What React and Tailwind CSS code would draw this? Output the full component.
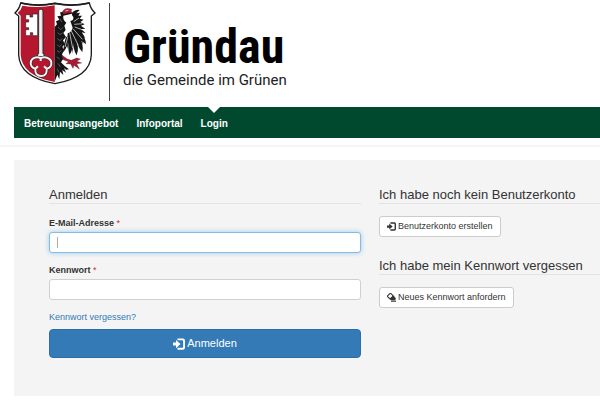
import { useState } from 'react';

const navItems = [
  { label: 'Betreuungsangebot', active: false },
  { label: 'Infoportal', active: false },
  { label: 'Login', active: true },
];

function CoatOfArms() {
  return (
    <svg viewBox="42 4 246 252" className="h-[84px] w-[82px] shrink-0" role="img" aria-label="Wappen">
      <path
        d="M62 10Q112 22 165 11Q218 22 268 10Q272 28 285 40L274 49V165Q272 232 165 252Q58 232 56 165V49L45 40Q58 28 62 10Z"
        fill="#fff"
        stroke="#1c1c1c"
        strokeWidth="4"
      />
      {/* rote Hälfte mit Schlüssel */}
      <path d="M67 18Q115 27 164 17V247Q66 228 62 165V48L53 40Q64 31 67 18Z" fill="#b5172f" />
      <path d="M62 10Q112 22 165 11Q218 22 268 10" fill="none" stroke="#1c1c1c" strokeWidth="5" />
      <path
        d="M77 45H90V52H98V43H113V108H98V99H91V108H77V90H86V84H77V67H86V60H77Z"
        fill="#fff"
        stroke="#222"
        strokeWidth="2"
      />
      <path d="M116 33Q122 24 129 33V162H132V176H113V162H116Z" fill="#f4f4f4" stroke="#222" strokeWidth="2.5" />
      <path d="M127 34V161" stroke="#777" strokeWidth="2" />
      <path
        d="M122 176C110 168 92 176 92 190C92 202 102 206 106 207C105 222 111 229 123 229C136 229 141 221 140 207C149 205 155 198 154 188C152 174 133 169 122 176Z"
        fill="none"
        stroke="#222"
        strokeWidth="9"
      />
      <path
        d="M122 176C110 168 92 176 92 190C92 202 102 206 106 207C105 222 111 229 123 229C136 229 141 221 140 207C149 205 155 198 154 188C152 174 133 169 122 176ZM106 207L114 200M140 207L132 200M122 176V184"
        fill="none"
        stroke="#f4f4f4"
        strokeWidth="6"
      />
      {/* schwarzer Adler */}
      <path
        d="M164 82L171 74L168 65L178 60L172 50L183 48L180 38L192 37Q199 24 211 31L216 42L203 45L190 48Q188 61 199 69L193 78L197 91L190 100L198 112L189 122L194 133L187 142L193 151L186 164L190 177L183 188L194 199L207 209L198 210L192 205L198 219L187 211L190 226L180 216L178 239L172 225L164 246Z"
        fill="#151515"
      />
      <path
        d="M187 37Q194 21 216 29L213 34L219 43L207 39L191 44Z"
        fill="#a91c34"
        stroke="#3c1019"
        strokeWidth="1"
      />
      <path d="M196 34L205 32" stroke="#fff" strokeWidth="2" />
      <g fill="#151515">
        <path d="M211 64Q222 62 220 52Q212 44 219 36Q230 28 239 31L229 41L240 39L235 48L246 48L239 57L251 60L241 67L254 74L243 78L256 88L244 88L257 101L245 98L256 115L242 106L250 133L235 110L243 148L229 114L233 158L220 113L219 163L211 115L201 149L203 101Q216 96 218 84Z" />
        <path d="M204 110Q205 143 190 157Q190 132 198 113Z" />
        <path d="M215 110Q223 146 209 166Q201 144 208 115Z" />
        <path d="M225 106Q239 145 230 167Q217 147 219 113Z" />
        <path d="M234 100Q253 134 247 157Q230 139 227 109Z" />
        <path d="M238 90Q258 114 258 134Q240 122 232 99Z" />
      </g>
      <g stroke="#fff" strokeWidth="2" fill="none">
        <path d="M221 66L237 55M223 74L247 72M224 82L249 91M220 88L247 119M214 94L235 138M209 99L218 146M203 112L195 142" />
      </g>
      <g stroke="#bbb" strokeWidth="1.2" fill="none">
        <path d="M180 57L185 67M174 82L182 90L190 83M173 99L180 105L188 99M172 117L180 123L187 117M171 135L178 141L185 135M171 153L178 158L184 152M170 172L179 178M174 191L181 202M172 207L176 218" />
      </g>
      <path
        d="M186 167L202 178L214 182L230 175L241 178L230 185L245 190L230 192L238 208L222 197L219 206L212 193L198 192L206 186L190 180Z"
        fill="#a91c34"
        stroke="#3c1019"
        strokeWidth="1"
      />
    </svg>
  );
}

function LoginIcon({ className }) {
  return (
    <svg viewBox="0 0 16 16" className={className} fill="currentColor" aria-hidden="true">
      <path d="M0 6H4V2.5L10 8L4 13.5V10H0Z" />
      <path d="M6 .5H13Q16 .5 16 3.5V12.5Q16 15.5 13 15.5H6V13H12.5Q13.5 13 13.5 12V4Q13.5 3 12.5 3H6Z" />
    </svg>
  );
}

function EraseIcon({ className }) {
  return (
    <svg viewBox="0 0 16 16" className={className} aria-hidden="true">
      <path d="M1 5L4.5 1.5Q6 0 7.5 1.5L12 6L6 11L1.5 7Q.5 6 1 5Z" fill="#fff" stroke="currentColor" strokeWidth="2" />
      <path d="M10.5 4.5L15 8.5Q16.5 10 15 11.5L13.5 13H8L4.5 10Z" fill="currentColor" />
      <path d="M7 13.5H16V15.5H7Z" fill="currentColor" />
    </svg>
  );
}

function Header() {
  return (
    <header className="border-b-2 border-[#f5f5f5] pb-[7px] pl-3.5">
      <div className="flex h-[107px]">
        <div className="pt-px">
          <CoatOfArms />
        </div>
        <div className="mt-[3px] ml-[13px] h-[98px] border-l border-[#444]" />
        <div className="ml-[13px] pt-[22px] whitespace-nowrap text-black">
          <div className="font-['Liberation_Sans_Narrow','Roboto_Condensed','Roboto',sans-serif] text-[48px] leading-[50px] font-bold">
            Gründau
          </div>
          <div className="font-['Roboto',sans-serif] text-[15px] leading-4 text-[#222]">die Gemeinde im Grünen</div>
        </div>
      </div>
      <nav className="flex h-[31px] gap-[18px] bg-[#00492f] px-[10px]">
        {navItems.map((item) => (
          <a
            key={item.label}
            href="#"
            className="relative flex h-full items-center pt-0.5 text-[10px] font-bold text-white"
          >
            {item.label}
            {item.active && (
              <span className="absolute top-0 left-1/2 h-0 w-0 -translate-x-1/2 border-x-[6px] border-t-[6px] border-x-transparent border-t-white" />
            )}
          </a>
        ))}
      </nav>
    </header>
  );
}

function SectionTitle({ children }) {
  return (
    <h2 className="border-b border-[#e3e3e3] text-[13px] leading-4 whitespace-nowrap text-[#333]">{children}</h2>
  );
}

function Field({ id, label, type, value, onChange, focused }) {
  return (
    <div>
      <label htmlFor={id} className="block text-[9px] leading-3 font-bold">
        {label} <span className="font-normal text-[#c9302c]">*</span>
      </label>
      <div className="relative mt-[3px]">
        <input
          id={id}
          type={type}
          value={value}
          onChange={onChange}
          className={
            focused
              ? 'block h-[21px] w-full rounded-[3px] border border-[#84bce8] bg-white px-2 text-[9px] shadow-[0_0_5px_rgba(102,175,233,0.6)] outline-none'
              : 'block h-[21px] w-full rounded-[3px] border border-[#d0d0d0] bg-white px-2 text-[9px] outline-none'
          }
        />
        {focused && !value && <span className="absolute top-[5px] left-2 h-[11px] w-px bg-[#aaa]" />}
      </div>
    </div>
  );
}

function LoginForm() {
  const [email, setEmail] = useState('');
  const [password, setPassword] = useState('');

  return (
    <form onSubmit={(e) => e.preventDefault()}>
      <SectionTitle>Anmelden</SectionTitle>
      <div className="mt-[13px] flex flex-col gap-[11px]">
        <Field
          id="email"
          label="E-Mail-Adresse"
          type="email"
          value={email}
          onChange={(e) => setEmail(e.target.value)}
          focused
        />
        <Field
          id="password"
          label="Kennwort"
          type="password"
          value={password}
          onChange={(e) => setPassword(e.target.value)}
        />
      </div>
      <a href="#" className="mt-[11px] block text-[9px] leading-3 text-[#337ab7]">
        Kennwort vergessen?
      </a>
      <button
        type="submit"
        className="mt-[6px] flex h-[29px] w-full items-center justify-center gap-0.5 rounded-[4px] border border-[#2e6da4] bg-[#337ab7] text-[11px] text-white"
      >
        <LoginIcon className="h-3 w-3" />
        Anmelden
      </button>
    </form>
  );
}

function ActionButton({ icon, children }) {
  return (
    <button
      type="button"
      className="mt-3 flex h-[21px] items-center gap-0.5 rounded-[3px] border border-[#ccc] bg-white px-[7px] text-[9px] whitespace-nowrap text-[#333]"
    >
      {icon}
      {children}
    </button>
  );
}

export default function App() {
  return (
    <div className="overflow-hidden bg-white font-['Liberation_Sans',Arial,sans-serif] text-[#333]">
      <Header />
      <main className="mt-[13px] mb-1 ml-3.5 grid grid-cols-[24fr_17fr] gap-[18px] bg-[#f4f4f4] pt-[27px] pb-[38px] pl-[35px]">
        <LoginForm />
        <div className="flex flex-col gap-[21px]">
          <section>
            <SectionTitle>Ich habe noch kein Benutzerkonto</SectionTitle>
            <ActionButton icon={<LoginIcon className="h-[9px] w-[9px]" />}>Benutzerkonto erstellen</ActionButton>
          </section>
          <section>
            <SectionTitle>Ich habe mein Kennwort vergessen</SectionTitle>
            <ActionButton icon={<EraseIcon className="h-[9px] w-[9px]" />}>Neues Kennwort anfordern</ActionButton>
          </section>
        </div>
      </main>
    </div>
  );
}
